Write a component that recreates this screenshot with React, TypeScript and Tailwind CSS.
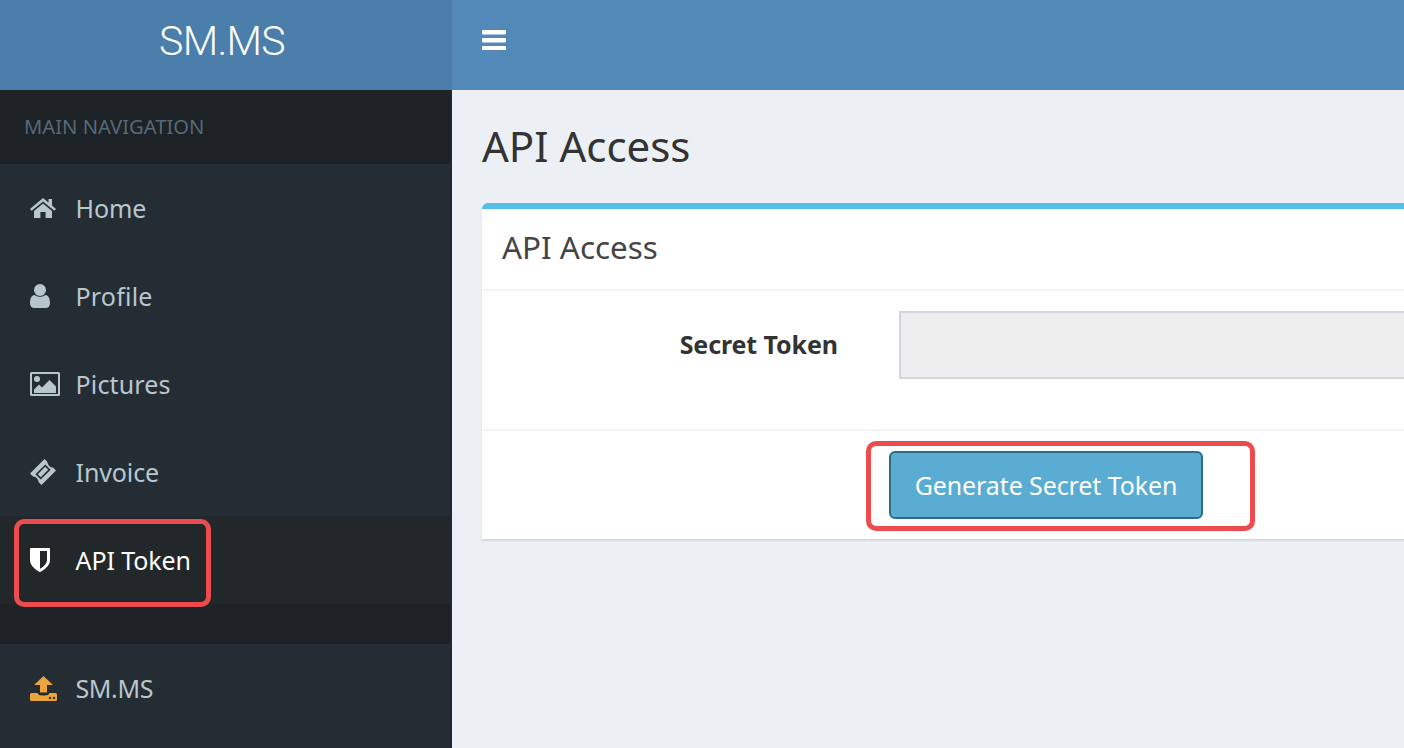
import type { ReactNode } from 'react';

const font = { fontFamily: '"Noto Sans", sans-serif' };

function Icon({ children, w, h, color = '#b8c7ce' }: { children: ReactNode; w: number; h: number; color?: string }) {
  return (
    <svg width={w} height={h} viewBox={`0 0 ${w} ${h}`} fill={color} className="block shrink-0">
      {children}
    </svg>
  );
}

const HomeIcon = () => (
  <Icon w={26} h={20}>
    <path d="M13 0 L18.5 4.6 V1 H22 V7.6 L26 11 L24.4 12.8 L13 3.4 L1.6 12.8 L0 11 Z" />
    <path d="M13 5.6 L22 13 V20 H15.6 V14 H10.4 V20 H4 V13 Z" />
  </Icon>
);

const UserIcon = () => (
  <Icon w={20} h={24}>
    <circle cx="10" cy="6" r="6" />
    <path d="M4.6 11 C7.5 13.4 12.5 13.4 15.4 11 C18.6 11.4 20 14.6 20 19 C20 22 18.4 24 15.8 24 H4.2 C1.6 24 0 22 0 19 C0 14.6 1.4 11.4 4.6 11 Z" />
  </Icon>
);

const PictureIcon = () => (
  <Icon w={30} h={24}>
    <path
      fillRule="evenodd"
      d="M1.5 0 H28.5 A1.5 1.5 0 0 1 30 1.5 V22.5 A1.5 1.5 0 0 1 28.5 24 H1.5 A1.5 1.5 0 0 1 0 22.5 V1.5 A1.5 1.5 0 0 1 1.5 0 Z M2 2 V22 H28 V2 Z"
    />
    <circle cx="7" cy="7" r="3" />
    <path d="M4 21 V17.5 L9 12.5 L12 15.5 L19.5 8 L26 14.5 V21 Z" />
  </Icon>
);

const TicketIcon = () => (
  <Icon w={26} h={26}>
    <path
      fillRule="evenodd"
      d="M14.5 0 L17.5 3 C17.2 5.5 20.5 8.8 23 8.5 L26 11.5 L11.5 26 L8.5 23 C8.8 20.5 5.5 17.2 3 17.5 L0 14.5 Z M15.3 5.4 L20.6 10.7 L10.7 20.6 L5.4 15.3 Z M15.2 7.8 L7.8 15.2 L10.8 18.2 L18.2 10.8 Z"
    />
  </Icon>
);

const ShieldIcon = () => (
  <Icon w={20} h={24} color="#ffffff">
    <path
      fillRule="evenodd"
      d="M0.8 0 H19.2 A0.8 0.8 0 0 1 20 0.8 V12 C20 17.5 14.5 22 10 24 C5.5 22 0 17.5 0 12 V0.8 A0.8 0.8 0 0 1 0.8 0 Z M10 3 V20.8 C13.4 19 17 15.6 17 12 V3 Z"
    />
  </Icon>
);

const UploadIcon = () => (
  <Icon w={27} h={25} color="#eca339">
    <path d="M13.5 0 L23 9 H17 V16.5 H10 V9 H4 Z" />
    <path
      fillRule="evenodd"
      d="M1.5 17 H7.5 C8 18.8 9.5 19.5 13.5 19.5 C17.5 19.5 19 18.8 19.5 17 H25.5 A1.5 1.5 0 0 1 27 18.5 V23.5 A1.5 1.5 0 0 1 25.5 25 H1.5 A1.5 1.5 0 0 1 0 23.5 V18.5 A1.5 1.5 0 0 1 1.5 17 Z M20 20.8 a1.2 1.2 0 1 0 0.01 0 Z M24 20.8 a1.2 1.2 0 1 0 0.01 0 Z"
    />
  </Icon>
);

function NavItem({ icon, label, active, tracking = 'tracking-[-0.1px]' }: { icon: ReactNode; label: string; active?: boolean; tracking?: string }) {
  return (
    <a className={`flex h-[88px] items-center pl-[30px] ${active ? 'bg-[#222829] text-white' : 'text-[#b8c7ce]'}`}>
      <span className="flex w-[45.5px] items-center">{icon}</span>
      <span className={`text-[25px] leading-none ${tracking}`}>{label}</span>
    </a>
  );
}

export default function App() {
  return (
    <div className="relative flex h-[748px] w-[1404px] overflow-hidden bg-[#ecf0f5]" style={font}>
      {/* Sidebar */}
      <aside className="flex w-[452px] shrink-0 flex-col">
        <div
          className="flex h-[90px] items-center justify-center bg-[#4b7eaa] pb-[6px] pr-[8px] text-[41px] font-light tracking-[-0.7px] text-white"
          style={{ fontFamily: 'Roboto, sans-serif' }}
        >
          SM.MS
        </div>
        <div className="flex-1 border-r-2 border-[#1f2a30] bg-[#252d34]">
          <div className="flex h-[74px] items-center bg-[#1d2226] pb-[2px] pl-6 text-[20.2px] text-[#566a78]">MAIN NAVIGATION</div>
          <NavItem icon={<HomeIcon />} label="Home" />
          <NavItem icon={<UserIcon />} label="Profile" tracking="tracking-[0.2px]" />
          <NavItem icon={<PictureIcon />} label="Pictures" tracking="tracking-[0.15px]" />
          <NavItem icon={<TicketIcon />} label="Invoice" />
          <NavItem icon={<ShieldIcon />} label="API Token" active />
          <div className="h-[40px] bg-[#1e2226]" />
          <NavItem icon={<UploadIcon />} label="SM.MS" tracking="tracking-[-0.4px]" />
        </div>
      </aside>

      {/* Main */}
      <div className="flex min-w-0 flex-1 flex-col">
        <header className="flex h-[90px] items-center bg-[#5289b9] pb-[10px] pl-[30px]">
          <svg width="24" height="20" viewBox="0 0 24 20" fill="#ffffff" className="block">
            <rect x="0" y="0" width="24" height="4.5" rx="1" />
            <rect x="0" y="8" width="24" height="4.5" rx="1" />
            <rect x="0" y="16" width="24" height="4.5" rx="1" />
          </svg>
        </header>
        <main className="pl-[30px]">
          <h1 className="flex h-[113px] items-center pb-[3px] text-[42px] font-normal text-[#333]">API Access</h1>
          <section className="w-[1000px] rounded-t-[6px] border-t-[6px] border-[#57bde9] bg-white shadow-[0_2px_2px_rgba(0,0,0,0.1)]">
            <div className="flex h-[82px] items-center border-b-2 border-[#f4f4f4] pb-1 pl-5 text-[31.4px] text-[#444]">API Access</div>
            <div className="flex h-[140px] items-start gap-[61px] border-b-2 border-[#f4f4f4] pt-5">
              <label className="flex h-[68px] w-[356px] shrink-0 items-center justify-end text-[25px] font-bold tracking-[-0.1px] text-[#333]">
                Secret Token
              </label>
              <div className="h-[68px] w-[600px] shrink-0 border-2 border-[#d2d6de] bg-[#eeeeee]" />
            </div>
            <div className="h-[108px] pl-[407px] pt-5">
              <button className="flex h-[68px] w-[314px] items-center justify-center rounded-[6px] border-2 border-[#2f6a87] bg-[#5bacd3] pt-[2px] text-[25px] tracking-[-0.1px] text-white">
                Generate Secret Token
              </button>
            </div>
          </section>
        </main>
      </div>

      {/* Red annotation boxes */}
      <div className="absolute left-[14px] top-[519px] h-[88px] w-[197px] rounded-[10px] border-[5px] border-[#ee4b4f]" />
      <div className="absolute left-[866px] top-[441px] h-[90px] w-[389px] rounded-[10px] border-[5px] border-[#ee4b4f]" />
    </div>
  );
}
